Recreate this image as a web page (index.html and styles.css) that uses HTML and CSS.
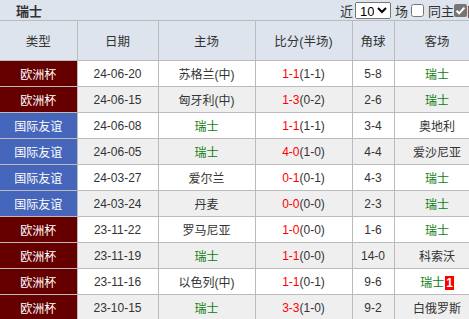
FILE: index.html
```html
<!DOCTYPE html>
<html lang="zh-CN">
<head>
<meta charset="utf-8">
<title>瑞士 近期战绩</title>
<link rel="stylesheet" href="styles.css">
</head>
<body>
<div class="panel">
  <div class="bar">
    <span class="bar-title">瑞士</span>
    <div class="bar-tools">
      <span class="lbl">近</span>
      <select class="sel"><option>10</option><option>20</option></select>
      <span class="lbl lbl-field">场</span>
      <input type="checkbox" class="chk">
      <span class="lbl lbl-home">同主</span>
      <span class="chk-on" role="checkbox" aria-checked="true"><svg width="13" height="13" viewBox="0 0 13 13"><rect x="0" y="0" width="13" height="13" rx="2" fill="#767676"/><path d="M2.6 6.8 L5.2 9.3 L10.4 3.6" fill="none" stroke="#ffffff" stroke-width="2"/></svg></span>
      <span class="lbl">同赛事</span>
    </div>
  </div>
  <table class="tbl">
    <colgroup>
      <col class="c-type"><col class="c-date"><col class="c-home"><col class="c-score"><col class="c-corner"><col class="c-away">
    </colgroup>
    <thead>
      <tr><th>类型</th><th>日期</th><th>主场</th><th>比分(半场)</th><th>角球</th><th>客场</th></tr>
    </thead>
    <tbody>
      <tr><td class="t-euro">欧洲杯</td><td>24-06-20</td><td>苏格兰(中)</td><td><span class="ft">1-1</span>(1-1)</td><td>5-8</td><td class="team">瑞士</td></tr>
      <tr><td class="t-euro">欧洲杯</td><td>24-06-15</td><td>匈牙利(中)</td><td><span class="ft">1-3</span>(0-2)</td><td>2-6</td><td class="team">瑞士</td></tr>
      <tr><td class="t-friendly">国际友谊</td><td>24-06-08</td><td class="team">瑞士</td><td><span class="ft">1-1</span>(1-1)</td><td>3-4</td><td>奥地利</td></tr>
      <tr><td class="t-friendly">国际友谊</td><td>24-06-05</td><td class="team">瑞士</td><td><span class="ft">4-0</span>(1-0)</td><td>4-4</td><td>爱沙尼亚</td></tr>
      <tr><td class="t-friendly">国际友谊</td><td>24-03-27</td><td>爱尔兰</td><td><span class="ft">0-1</span>(0-1)</td><td>4-3</td><td class="team">瑞士</td></tr>
      <tr><td class="t-friendly">国际友谊</td><td>24-03-24</td><td>丹麦</td><td><span class="ft">0-0</span>(0-0)</td><td>2-3</td><td class="team">瑞士</td></tr>
      <tr><td class="t-euro">欧洲杯</td><td>23-11-22</td><td>罗马尼亚</td><td><span class="ft">1-0</span>(0-0)</td><td>1-6</td><td class="team">瑞士</td></tr>
      <tr><td class="t-euro">欧洲杯</td><td>23-11-19</td><td class="team">瑞士</td><td><span class="ft">1-1</span>(0-0)</td><td>14-0</td><td>科索沃</td></tr>
      <tr><td class="t-euro">欧洲杯</td><td>23-11-16</td><td>以色列(中)</td><td><span class="ft">1-1</span>(0-1)</td><td>9-6</td><td class="team">瑞士<span class="badge">1</span></td></tr>
      <tr><td class="t-euro">欧洲杯</td><td>23-10-15</td><td class="team">瑞士</td><td><span class="ft">3-3</span>(1-0)</td><td>9-2</td><td>白俄罗斯</td></tr>
    </tbody>
  </table>
</div>
</body>
</html>
```
FILE: styles.css
```css
html, body {
  margin: 0;
  padding: 0;
  overflow: hidden;
  background: #ffffff;
}
body {
  font-family: "Liberation Sans", "Noto Sans CJK SC", sans-serif;
  font-size: 12px;
  color: #333333;
}
.panel {
  width: 506px;
  background: #dde4ee;
}
.bar {
  display: flex;
  align-items: center;
  padding-top: 1px;
  border-bottom: 1px solid #bbbbbb;
  box-sizing: border-box;
  height: 21px;
}
.bar-title {
  padding-left: 16px;
  font-size: 13px;
  font-weight: bold;
  color: #333333;
}
.bar-tools {
  margin-left: auto;
  display: flex;
  align-items: center;
  font-size: 13px;
  white-space: nowrap;
}
.sel {
  font-size: 13px;
  height: 17px;
  width: 36px;
  padding: 0;
  margin: 0 0 0 2px;
  font-family: "Liberation Sans", sans-serif;
}
.lbl-field {
  margin: 0 3px 0 4px;
}
.lbl-home {
  margin-left: 4px;
}
.chk {
  margin: 0;
  width: 13px;
  height: 13px;
  flex: none;
}
.chk-on {
  display: block;
  width: 13px;
  height: 13px;
  flex: none;
}
.chk-on svg {
  display: block;
}
.tbl {
  width: 480px;
  border-collapse: collapse;
  table-layout: fixed;
  background: #ffffff;
}
.c-type { width: 77px; }
.c-date { width: 81px; }
.c-home { width: 97px; }
.c-score { width: 97px; }
.c-corner { width: 42px; }
.c-away { width: 86px; }
.tbl th, .tbl td {
  border: 1px solid #bbbbbb;
  text-align: center;
  padding: 0;
  white-space: nowrap;
  font-weight: normal;
}
.tbl thead th {
  border-top: none;
}
.tbl th {
  height: 39px;
  background: #dde4ee;
  font-size: 12.5px;
  color: #333333;
}
.tbl td {
  height: 25px;
}
.tbl th:first-child, .tbl td:first-child {
  border-left: none;
}
.tbl tbody tr:nth-child(even) td {
  background: #efefef;
}
.tbl tbody tr td.t-euro {
  background: #660000;
  color: #ffffff;
}
.tbl tbody tr td.t-friendly {
  background: #4666bb;
  color: #ffffff;
}
.ft {
  color: #ff0000;
}
.team {
  color: #108010;
}
.badge {
  display: inline-block;
  background: #ff0000;
  color: #ffffff;
  font-weight: bold;
  padding: 0 1px;
  line-height: 14px;
  margin-left: 1px;
}
```
